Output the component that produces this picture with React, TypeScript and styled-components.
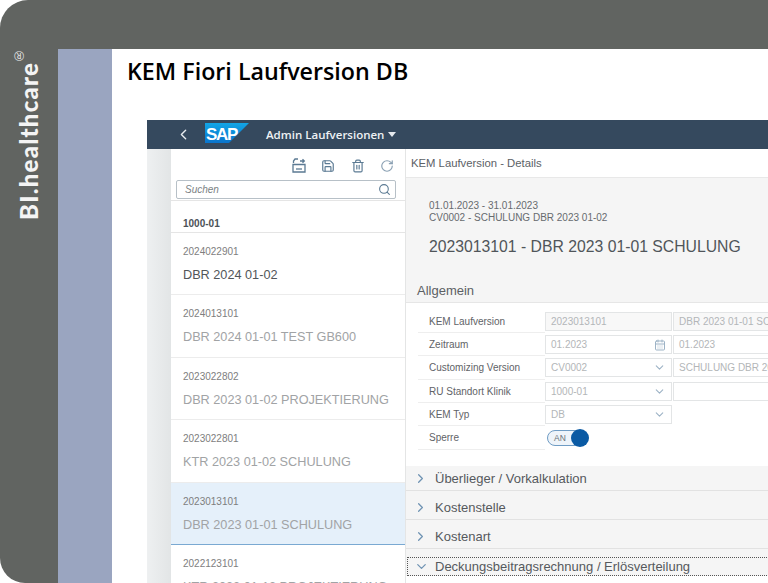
import React from "react";
import styled, { createGlobalStyle } from "styled-components";
import { ChevronLeft, ChevronRight, ChevronDown, Search, RotateCw, Save, Trash2, CalendarDays } from "lucide-react";

const GlobalStyle = createGlobalStyle`
  html, body {
    margin: 0;
    padding: 0;
    background: #fff;
    overflow: hidden;
  }
  * { box-sizing: border-box; }
`;

const Frame = styled.div`
  width: 768px;
  height: 583px;
  display: flex;
  overflow: hidden;
  background: #616461;
  border-radius: 28px 0 0 25px;
  font-family: "Liberation Sans", Arial, sans-serif;
`;
const Rail = styled.div`
  width: 58px;
  flex: none;
  padding-top: 52px;
  display: flex;
  flex-direction: column;
  align-items: center;
`;
const Brand = styled.div`
  writing-mode: vertical-rl;
  transform: rotate(180deg);
  font-family: Lato, sans-serif;
  font-weight: 900;
  font-size: 24px;
  line-height: 24px;
  letter-spacing: 1.25px;
  color: #f4f4f4;
  height: 168px;
  white-space: nowrap;
  position: relative;
`;
const Registered = styled.span`
  position: absolute;
  top: 155px;
  left: 16px;
  font-family: "Open Sans", sans-serif;
  font-size: 13px;
  line-height: 12px;
  letter-spacing: 0;
  font-weight: 400;
  color: #dcdcdc;
`;
const Stage = styled.div`
  flex: 1;
  margin-top: 49px;
  display: flex;
  min-width: 0;
`;
const Stripe = styled.div`
  width: 54px;
  flex: none;
  background: #9aa5c0;
`;
const Slide = styled.div`
  flex: 1;
  background: #fff;
  min-width: 0;
  overflow: hidden;
`;
const Title = styled.h1`
  margin: 0;
  padding: 7px 0 0 15px;
  height: 71px;
  font-family: "Open Sans", sans-serif;
  font-size: 23.25px;
  line-height: 30px;
  font-weight: 600;
  color: #000;
`;
const Shot = styled.div`
  margin-left: 35px;
  width: 640px;
  height: 463px;
  overflow: hidden;
`;
const ShellBar = styled.div`
  height: 29px;
  background: #35495e;
  display: flex;
  align-items: center;
  color: #eef1f4;
`;
const BackBtn = styled.div`
  width: 58px;
  padding-left: 28px;
  display: flex;
  color: #e6eaee;
`;
const Logo = styled.svg`
  margin-bottom: 3px;
  flex: none;
`;
const ShellTitle = styled.div`
  margin-left: 17px;
  font-family: "Open Sans", sans-serif;
  font-size: 11.5px;
  font-weight: 600;
  display: flex;
  align-items: center;
  gap: 4px;
`;
const Caret = styled.span`
  width: 0;
  height: 0;
  border-left: 4px solid transparent;
  border-right: 4px solid transparent;
  border-top: 5px solid #e6eaee;
`;
const Body = styled.div`
  display: flex;
  height: 434px;
`;
const Gutter = styled.div`
  width: 24px;
  flex: none;
  background: linear-gradient(90deg, #eef0f1, #e2e5e6);
`;
const Master = styled.div`
  width: 235px;
  flex: none;
  background: #fff;
  border-right: 1px solid #e4e5e5;
`;
const MasterTools = styled.div`
  height: 31px;
  display: flex;
  justify-content: flex-end;
  align-items: center;
  gap: 15.5px;
  padding: 2px 11px 0 0;
  color: #5b7a93;
`;
const RefreshIcon = styled(RotateCw)`
  color: #8aa0b3;
`;
const SearchRow = styled.div`
  height: 21px;
  padding: 0 9px 0 5px;
  border-bottom: 1px solid #e5e5e5;
`;
const SearchBox = styled.div`
  height: 19px;
  border: 1px solid #b7c0c7;
  border-radius: 2px;
  display: flex;
  align-items: center;
  justify-content: space-between;
  padding: 0 4px 0 8px;
  font-size: 10px;
  font-style: italic;
  color: #7b7f83;
`;
const GroupHead = styled.div`
  height: 32px;
  padding: 16px 0 0 12px;
  border-bottom: 1px solid #e5e5e5;
  font-size: 10px;
  line-height: 14px;
  font-weight: 700;
  color: #4c5257;
`;
const Item = styled.div<{ $selected?: boolean }>`
  height: 62.4px;
  padding: 12px 0 0 12px;
  background: ${(p) => (p.$selected ? "#e5f0fa" : "#fff")};
  border-bottom: ${(p) => (p.$selected ? "1px solid #7aa9d2" : "1px solid #ececec")};
`;
const ItemId = styled.div`
  font-size: 10px;
  line-height: 13px;
  color: #7e7e7e;
`;
const ItemName = styled.div<{ $dark?: boolean }>`
  margin-top: 9px;
  font-size: 12.7px;
  line-height: 16px;
  white-space: nowrap;
  color: ${(p) => (p.$dark ? "#525659" : "#a1a3a5")};
`;
const Detail = styled.div`
  flex: 1;
  min-width: 0;
  background: #f5f5f5;
  display: flex;
  flex-direction: column;
`;
const DetailHead = styled.div`
  height: 29px;
  flex: none;
  background: #fff;
  border-bottom: 1px solid #e8e8e8;
  padding: 7px 0 0 5px;
  font-size: 11.3px;
  line-height: 14px;
  color: #5c6166;
`;
const Header = styled.div`
  height: 92px;
  flex: none;
  padding: 22px 0 0 23px;
  color: #676b6f;
  font-size: 10px;
  line-height: 12px;
`;
const Heading = styled.div`
  margin-top: 13px;
  font-size: 15.75px;
  line-height: 20px;
  color: #50555a;
  white-space: nowrap;
`;
const SectionTitle = styled.div`
  height: 32px;
  flex: none;
  padding: 12px 0 0 11px;
  font-size: 13px;
  line-height: 17px;
  color: #5c6064;
`;
const FormPanel = styled.div`
  background: #fff;
  border-top: 1px solid #e6e6e6;
  padding: 6.5px 0 0 12px;
  height: 164px;
  flex: none;
  display: flex;
  flex-direction: column;
`;
const FormRow = styled.div`
  height: 23.4px;
  display: flex;
  align-items: center;
  flex: none;
`;
const FormLabel = styled.div`
  width: 127px;
  height: 100%;
  flex: none;
  padding-left: 11px;
  border-bottom: 1px solid #eeeeee;
  font-size: 10px;
  line-height: 24px;
  color: #5f6367;
  white-space: nowrap;
`;
const Field = styled.div<{ $filled?: boolean }>`
  width: 127px;
  height: 19px;
  flex: none;
  margin-right: 1px;
  border: 1px solid #e3e5e6;
  background: ${(p) => (p.$filled ? "#f8f8f8" : "#fff")};
  padding: 0 5px;
  display: flex;
  align-items: center;
  justify-content: space-between;
  font-size: 10px;
  color: #b3b6b8;
  white-space: nowrap;
  overflow: hidden;
`;
const Toggle = styled.div`
  width: 40px;
  height: 16px;
  margin-left: 2px;
  border: 1px solid #6f9cc4;
  border-radius: 9px;
  background: #eef4fa;
  font-size: 8.5px;
  line-height: 14px;
  color: #6b7278;
  padding-left: 6px;
  position: relative;
`;
const Knob = styled.span`
  position: absolute;
  right: -3px;
  top: -2px;
  width: 18px;
  height: 18px;
  border-radius: 50%;
  background: #0a5aa4;
`;
const Accordion = styled.div<{ $first?: boolean }>`
  height: ${(p) => (p.$first ? "25px" : "29px")};
  padding: ${(p) => (p.$first ? "0 0 0 7px" : "4px 0 0 7px")};
  flex: none;
  border-bottom: 1px solid #e2e2e2;
  display: flex;
  align-items: center;
  gap: 7px;
  font-size: 13px;
  color: #55595d;
  white-space: nowrap;
`;
const OpenAccordion = styled.div`
  height: 19px;
  flex: none;
  margin: 8px 0 0 1px;
  padding-left: 6px;
  border: 1px dotted #555;
  display: flex;
  align-items: center;
  gap: 6px;
  font-size: 13px;
  color: #55595d;
  white-space: nowrap;
`;
const Filler = styled.div`
  flex: 1;
  background: #fff;
`;
const Blue = styled.span`
  display: flex;
  color: #6f93b3;
`;

const items = [
  { id: "2024022901", name: "DBR 2024 01-02", dark: true },
  { id: "2024013101", name: "DBR 2024 01-01 TEST GB600" },
  { id: "2023022802", name: "DBR 2023 01-02 PROJEKTIERUNG" },
  { id: "2023022801", name: "KTR 2023 01-02 SCHULUNG" },
  { id: "2023013101", name: "DBR 2023 01-01 SCHULUNG", selected: true },
  { id: "2022123101", name: "KTR 2022 01-12 PROJEKTIERUNG" },
];

const SapLogo = () => (
  <Logo width="44" height="20" viewBox="0 0 44 20">
    <defs>
      <linearGradient id="sap" x1="0" y1="0" x2="0" y2="1">
        <stop offset="0" stopColor="#12a5e6" />
        <stop offset="1" stopColor="#0a74cc" />
      </linearGradient>
    </defs>
    <polygon points="0,0 44,0 24,20 0,20" fill="url(#sap)" />
    <text x="1" y="17" fontFamily="Liberation Sans" fontWeight="700" fontSize="17" fill="#fff" letterSpacing="-1.3">
      SAP
    </text>
  </Logo>
);

const ImportIcon = () => (
  <svg width="14" height="15" viewBox="0 0 14 15" fill="none" stroke="currentColor" strokeWidth="1.3">
    <path d="M6 1 H3 L1.5 3 V5 M1 6.5 H13 V14 H1 Z" />
    <path d="M8 3 h4 M10.5 1.2 l1.8 1.8 -1.8 1.8" />
    <path d="M4 11 h6" />
  </svg>
);

export default function App() {
  return (
    <>
      <GlobalStyle />
      <Frame>
        <Rail>
          <Brand>
            BI.healthcare
            <Registered>®</Registered>
          </Brand>
        </Rail>
        <Stage>
          <Stripe />
          <Slide>
            <Title>KEM Fiori Laufversion DB</Title>
            <Shot>
              <ShellBar>
                <BackBtn>
                  <ChevronLeft size={17} strokeWidth={2} />
                </BackBtn>
                <SapLogo />
                <ShellTitle>
                  Admin Laufversionen <Caret />
                </ShellTitle>
              </ShellBar>
              <Body>
                <Gutter />
                <Master>
                  <MasterTools>
                    <ImportIcon />
                    <Save size={14} />
                    <Trash2 size={14} />
                    <RefreshIcon size={14} />
                  </MasterTools>
                  <SearchRow>
                    <SearchBox>
                      Suchen
                      <Search size={13} color="#5b7a93" />
                    </SearchBox>
                  </SearchRow>
                  <GroupHead>1000-01</GroupHead>
                  {items.map((it) => (
                    <Item key={it.id} $selected={it.selected}>
                      <ItemId>{it.id}</ItemId>
                      <ItemName $dark={it.dark}>{it.name}</ItemName>
                    </Item>
                  ))}
                </Master>
                <Detail>
                  <DetailHead>KEM Laufversion - Details</DetailHead>
                  <Header>
                    01.01.2023 - 31.01.2023
                    <br />
                    CV0002 - SCHULUNG DBR 2023 01-02
                    <Heading>2023013101 - DBR 2023 01-01 SCHULUNG</Heading>
                  </Header>
                  <SectionTitle>Allgemein</SectionTitle>
                  <FormPanel>
                    <FormRow>
                      <FormLabel>KEM Laufversion</FormLabel>
                      <Field $filled>2023013101</Field>
                      <Field $filled>DBR 2023 01-01 SCHULUNG</Field>
                    </FormRow>
                    <FormRow>
                      <FormLabel>Zeitraum</FormLabel>
                      <Field>
                        01.2023 <CalendarDays size={12} color="#9db3c6" />
                      </Field>
                      <Field>
                        01.2023 <CalendarDays size={12} color="#9db3c6" />
                      </Field>
                    </FormRow>
                    <FormRow>
                      <FormLabel>Customizing Version</FormLabel>
                      <Field>
                        CV0002 <ChevronDown size={13} color="#9db3c6" />
                      </Field>
                      <Field>SCHULUNG DBR 2023 01-02</Field>
                    </FormRow>
                    <FormRow>
                      <FormLabel>RU Standort Klinik</FormLabel>
                      <Field>
                        1000-01 <ChevronDown size={13} color="#9db3c6" />
                      </Field>
                      <Field />
                    </FormRow>
                    <FormRow>
                      <FormLabel>KEM Typ</FormLabel>
                      <Field>
                        DB <ChevronDown size={13} color="#9db3c6" />
                      </Field>
                    </FormRow>
                    <FormRow>
                      <FormLabel>Sperre</FormLabel>
                      <Toggle>
                        AN
                        <Knob />
                      </Toggle>
                    </FormRow>
                  </FormPanel>
                  {["Überlieger / Vorkalkulation", "Kostenstelle", "Kostenart"].map((t, i) => (
                    <Accordion key={t} $first={i === 0}>
                      <Blue>
                        <ChevronRight size={15} />
                      </Blue>
                      {t}
                    </Accordion>
                  ))}
                  <OpenAccordion>
                    <Blue>
                      <ChevronDown size={15} />
                    </Blue>
                    Deckungsbeitragsrechnung / Erlösverteilung
                  </OpenAccordion>
                  <Filler />
                </Detail>
              </Body>
            </Shot>
          </Slide>
        </Stage>
      </Frame>
    </>
  );
}
